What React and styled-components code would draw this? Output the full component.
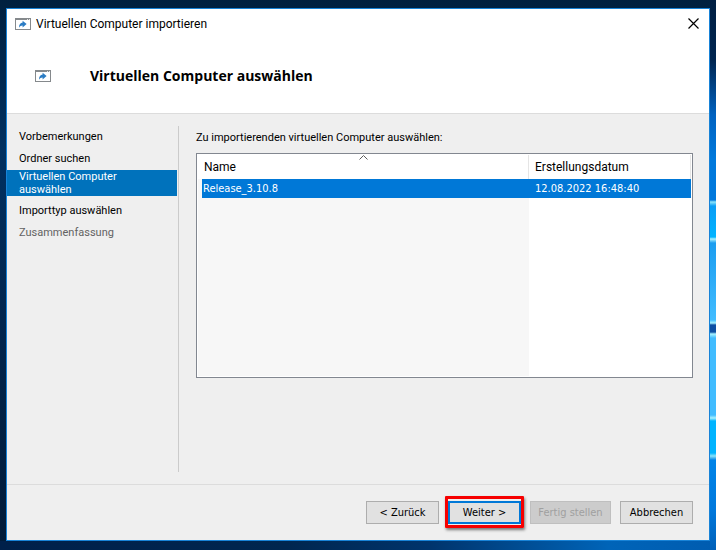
import React, { useState } from "react";
import styled, { createGlobalStyle } from "styled-components";

const steps = [
  { id: 1, title: "Vorbemerkungen" },
  { id: 2, title: "Ordner suchen" },
  { id: 3, title: "Virtuellen Computer auswählen" },
  { id: 4, title: "Importtyp auswählen" },
  { id: 5, title: "Zusammenfassung", disabled: true },
];

const machines = [
  { id: 1, name: "Release_3.10.8", created: "12.08.2022 16:48:40" },
];

const ImportIcon = () => (
  <IconSvg width="16" height="12" viewBox="0 0 16 12" aria-hidden="true">
    <rect x="0.5" y="0.5" width="15" height="11" fill="#fff" stroke="#85898c" />
    <path d="M0 0h16v2H0z" fill="#85898c" />
    <path d="M12 1h1v1h-1zM14 1h1v1h-1z" fill="#e4e5e6" />
    <path
      d="M4 9.8C4 6.6 5.4 4.8 7.6 4.6V2.8L11.6 6.1L7.6 9.4V7.5C6 7.5 5 8.2 4 9.8z"
      fill="#2b7cc4"
    />
  </IconSvg>
);

const App = () => {
  const [selected, setSelected] = useState(1);

  return (
    <>
      <GlobalStyle />
      <Desktop>
        <Window>
          <TitleBar>
            <ImportIcon />
            <WindowTitle>Virtuellen Computer importieren</WindowTitle>
            <CloseBtn type="button" aria-label="Schließen">
              <svg width="11" height="11" viewBox="0 0 11 11">
                <path
                  d="M0.5 0.5l10 10M10.5 0.5l-10 10"
                  stroke="#000"
                  strokeWidth="1.2"
                />
              </svg>
            </CloseBtn>
          </TitleBar>
          <Header>
            <ImportIcon />
            <h1>Virtuellen Computer auswählen</h1>
          </Header>
          <Body>
            <Steps>
              {steps.map(({ id, title, disabled }) => (
                <Step key={id} $active={id === 3} $disabled={disabled}>
                  {title}
                </Step>
              ))}
            </Steps>
            <Content>
              <Label id="machines">
                Zu importierenden virtuellen Computer auswählen:
              </Label>
              <ListBox>
                <Table aria-labelledby="machines">
                  <thead>
                    <tr>
                      <NameHead>
                        Name
                        <SortArrow width="9" height="5" viewBox="0 0 9 5">
                          <path
                            d="M0.5 4.5l4-4l4 4"
                            fill="none"
                            stroke="#5c5c5c"
                          />
                        </SortArrow>
                      </NameHead>
                      <DateHead>Erstellungsdatum</DateHead>
                    </tr>
                  </thead>
                  <tbody>
                    {machines.map(({ id, name, created }) => (
                      <Row
                        key={id}
                        $selected={id === selected}
                        onClick={() => setSelected(id)}
                      >
                        <td>{name}</td>
                        <td>{created}</td>
                      </Row>
                    ))}
                    <EmptyRow>
                      <td />
                      <td />
                    </EmptyRow>
                  </tbody>
                </Table>
              </ListBox>
            </Content>
          </Body>
          <Footer>
            <Button type="button">&lt; Zurück</Button>
            <Highlight>
              <Button type="button" $primary>
                Weiter &gt;
              </Button>
            </Highlight>
            <Button type="button" $wide disabled>
              Fertig stellen
            </Button>
            <Button type="button">Abbrechen</Button>
          </Footer>
        </Window>
      </Desktop>
    </>
  );
};

export default App;

const GlobalStyle = createGlobalStyle`
  * {
    box-sizing: border-box;
  }
  body {
    margin: 0;
    font-family: Tahoma, Roboto, "Noto Sans", sans-serif;
    font-size: 11px;
    line-height: 13px;
    color: #000;
  }
`;

const Desktop = styled.div`
  display: flex;
  min-height: 100vh;
  padding: 8px 6px 9px;
  background:
    linear-gradient(
        180deg,
        #001f42 0,
        #002550 60px,
        #0062c0 115px,
        #0079dc 160px,
        #0078dc 200px,
        #8ae4fa 202px,
        #0a9df5 206px,
        #00b4ff 237px,
        #a8f2ff 239px,
        #1b9df0 243px,
        #41bcff 320px,
        #a8f2ff 323px,
        #0c4ea3 325px,
        #0c4ea3 332px,
        #a8f2ff 334px,
        #41bcff 338px,
        #41bcff 415px,
        #a8f2ff 418px,
        #00b4ff 421px,
        #00b4ff 453px,
        #8ae4fa 456px,
        #0084e8 460px,
        #0078dc 510px,
        #0060b8 550px
      )
      right top / 6px 100% no-repeat,
    linear-gradient(90deg, #00204a 0, #00264f 40%, #00346c 60%, #0064b8 85%, #005cb0 100%)
      left bottom / 100% 9px no-repeat,
    linear-gradient(180deg, #00203f 0, #003060 150px, #002650 300px, #001a38 100%);
`;

const Window = styled.main`
  display: flex;
  flex: 1;
  flex-direction: column;
  border: 1px solid #1883d7;
  background-color: #efefef;
`;

const IconSvg = styled.svg`
  flex: none;
`;

const TitleBar = styled.div`
  display: flex;
  align-items: center;
  gap: 5px;
  height: 29px;
  padding: 0 8px;
  background-color: #fff;
`;

const WindowTitle = styled.span`
  flex: 1;
  font-family: "Segoe UI", Roboto, "Open Sans", sans-serif;
  font-size: 12px;
  line-height: 16px;
`;

const CloseBtn = styled.button`
  display: flex;
  padding: 2px;
  border: none;
  background: none;
`;

const Header = styled.header`
  display: flex;
  align-items: center;
  gap: 39px;
  height: 76px;
  padding: 0 28px;
  border-bottom: 1px solid #dcdcdc;
  background-color: #fff;
  h1 {
    margin: 0;
    font-family: Tahoma, "Open Sans", sans-serif;
    font-size: 14px;
    line-height: 18px;
  }
`;

const Body = styled.div`
  display: flex;
  flex: 1;
  padding: 12px 16px 12px 0;
`;

const Steps = styled.ol`
  flex: none;
  width: 172px;
  margin: 0;
  padding: 0 1px 0 0;
  border-right: 1px solid #cbcbcb;
  list-style: none;
`;

const Step = styled.li`
  margin: ${({ $active }) => ($active ? "0 0 4px" : "0")};
  padding: ${({ $active }) => ($active ? "0 48px 0 12px" : "4px 12px 5px")};
  color: ${({ $active, $disabled }) =>
    $active ? "#fff" : $disabled ? "#636363" : "#000"};
  background-color: ${({ $active }) => ($active ? "#0072bc" : "transparent")};
`;

const Content = styled.section`
  flex: 1;
  padding: 5px 0 0 17px;
`;

const Label = styled.p`
  margin: 0 0 9px;
`;

const ListBox = styled.div`
  height: 225px;
  padding: 1px;
  border: 1px solid #828790;
  background-color: #fff;
`;

const Table = styled.table`
  width: 100%;
  height: 100%;
  border-collapse: separate;
  border-spacing: 0;
  table-layout: fixed;
  td {
    padding: 0 6px;
    font-family: Tahoma, "DejaVu Sans Condensed", sans-serif;
  }
`;

const HeadCell = styled.th`
  height: 24px;
  padding: 0 6px;
  border-right: 1px solid #e5e5e5;
  font-family: "Segoe UI", Roboto, "Open Sans", sans-serif;
  font-size: 12px;
  font-weight: 400;
  line-height: 16px;
  text-align: left;
`;

const NameHead = styled(HeadCell)`
  position: relative;
`;

const DateHead = styled(HeadCell)`
  width: 162px;
`;

// sits centred on the upper edge of the sorted column
const SortArrow = styled.svg`
  position: absolute;
  top: 0;
  left: calc(50% - 4px);
`;

const Row = styled.tr`
  height: 19px;
  color: ${({ $selected }) => ($selected ? "#fff" : "#000")};
  background-color: ${({ $selected }) => ($selected ? "#0078d7" : "#fff")};
  td:first-child {
    padding: 0 1px;
    border-left: 4px solid #f7f7f7;
  }
`;

const EmptyRow = styled.tr`
  td:first-child {
    background-color: #f7f7f7;
  }
`;

const Footer = styled.footer`
  display: flex;
  justify-content: flex-end;
  gap: 9px;
  padding: 16px;
  border-top: 1px solid #dcdcdc;
`;

const Button = styled.button`
  width: ${({ $wide }) => ($wide ? "81px" : "73px")};
  height: 23px;
  padding: 0;
  border: ${({ $primary }) =>
    $primary ? "2px solid #0078d7" : "1px solid #adadad"};
  background-color: #e1e1e1;
  color: #000;
  font-family: Tahoma, "DejaVu Sans Condensed", sans-serif;
  font-size: 11px;
  line-height: 13px;
  &:disabled {
    border-color: #bfbfbf;
    background-color: #cccccc;
    color: #a0a0a0;
  }
`;

// red frame drawn around the next button
const Highlight = styled.div`
  position: relative;
  height: 23px;
  &::after {
    content: "";
    position: absolute;
    inset: -5px -3px -4px;
    border: 3px solid #f60000;
    border-radius: 1px;
    box-shadow: 1px 2px 3px rgba(0, 0, 0, 0.5);
    pointer-events: none;
  }
`;
